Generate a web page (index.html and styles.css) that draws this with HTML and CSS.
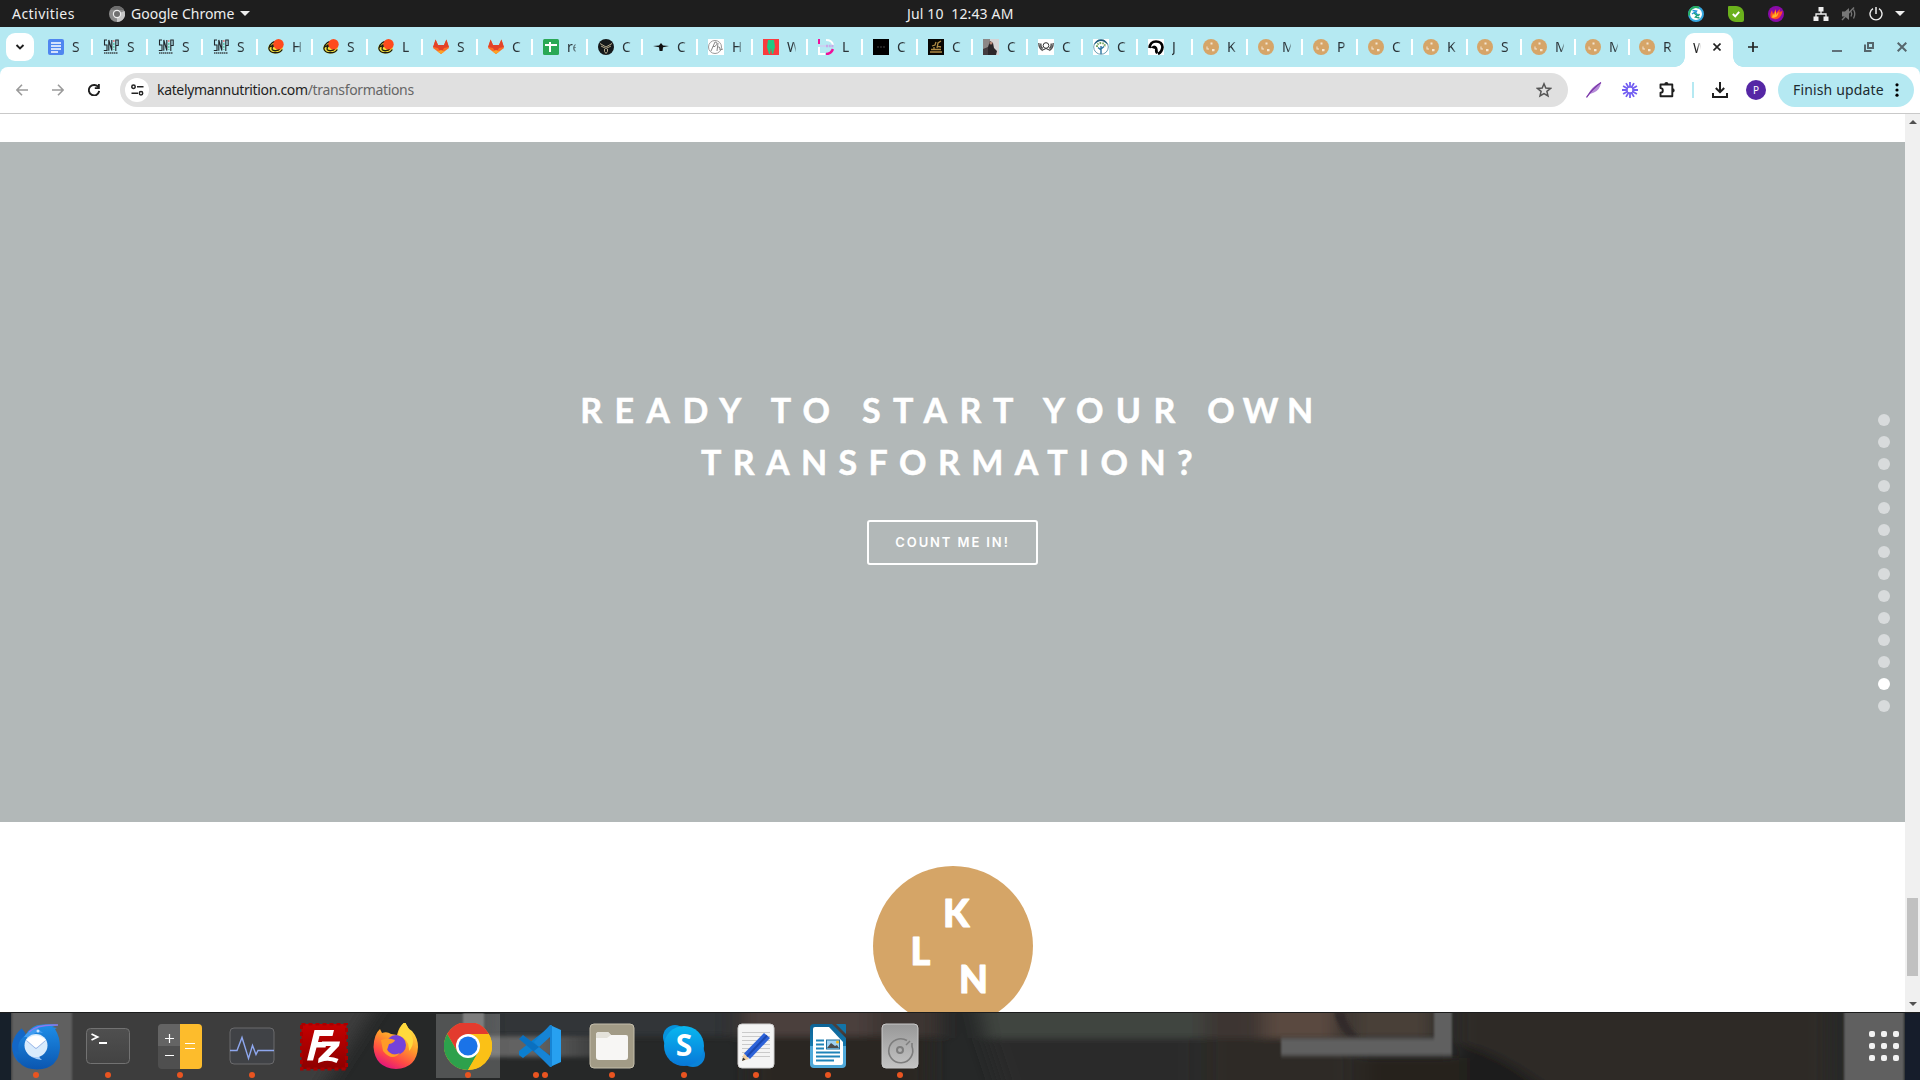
FILE: index.html
```html
<!DOCTYPE html>
<html lang="en">
<head>
<meta charset="utf-8">
<title>Transformations</title>
<link rel="stylesheet" href="styles.css">
</head>
<body>
<svg width="0" height="0" class="defs">
  <defs>
    <linearGradient id="gBlue" x1="0" y1="0" x2="0" y2="1"><stop offset="0" stop-color="#1e8ee8"/><stop offset="1" stop-color="#0b56b0"/></linearGradient>
    <linearGradient id="gGrey" x1="0" y1="0" x2="0" y2="1"><stop offset="0" stop-color="#4f4f4f"/><stop offset="1" stop-color="#434343"/></linearGradient>
    <linearGradient id="gFire" x1="0.8" y1="0" x2="0.3" y2="1"><stop offset="0" stop-color="#fff04a"/><stop offset=".45" stop-color="#ff9a2a"/><stop offset=".75" stop-color="#ff4a45"/><stop offset="1" stop-color="#e1127f"/></linearGradient>
    <linearGradient id="gSkype" x1="0" y1="0" x2="0" y2="1"><stop offset="0" stop-color="#08b7f0"/><stop offset="1" stop-color="#0878d8"/></linearGradient>
    <linearGradient id="gDisk" x1="0" y1="0" x2="0" y2="1"><stop offset="0" stop-color="#989898"/><stop offset="1" stop-color="#c4c4c4"/></linearGradient>
    <linearGradient id="gFz" x1="0" y1="0" x2="0" y2="1"><stop offset="0" stop-color="#c60000"/><stop offset="1" stop-color="#8d0000"/></linearGradient>
    <linearGradient id="gWrite" x1="0" y1="0" x2="0" y2="1"><stop offset="0" stop-color="#0d6396"/><stop offset=".5" stop-color="#1478ad"/><stop offset=".5" stop-color="#4fa9da"/><stop offset="1" stop-color="#4fa9da"/></linearGradient>
    <symbol id="cookie" viewBox="0 0 16 16"><circle cx="8" cy="8" r="8" fill="#d6a568"/><path d="M7.500 3.500h2v2h-2zM3.500 7.500h1v2h1.500v1h-2.500zM9 10h2.500v2.200H9z" fill="#f3e6d2"/></symbol>
    <symbol id="snip" viewBox="0 0 16 16"><path d="M4 1H1.500v5H4v5.500H.8M5.800 11.800V1l3 10.500V1M12.800 12V1h2.400v5.500h-2.400" fill="none" stroke="#20262b" stroke-width="1.100"/><path d="M10.800 1v2" stroke="#e77" stroke-width="1.300"/><path d="M10.800 4v7" stroke="#5cc5a0" stroke-width="1.300" stroke-dasharray="2 1"/><path d="M1 14h14" stroke="#3d484c" stroke-width="1.700" stroke-dasharray="1.500 .5"/></symbol>
    <symbol id="bun" viewBox="0 0 16 16"><ellipse cx="7.500" cy="9" rx="7.300" ry="5.500" fill="#f6e33a"/><path d="M.8 9.500C2 4 6 2 9 3M.8 9.500c1 5.500 11 5.500 13.500 1M4 10.500c2 2 6 1.500 8-1M4 10.500C4 7 6 6.500 8 7M2.500 8q3-3 5-3" fill="none" stroke="#1b1b12" stroke-width="1.300"/><circle cx="10.500" cy="5.200" r="5.200" fill="#ff4a1c"/></symbol>
    <symbol id="fox" viewBox="0 0 16 16"><path d="M8 15L0 9l2.600-8.500L5 6h6l2.400-5.500L16 9z" fill="#fc6d26"/><path d="M2.600.5L5 6h6l2.400-5.500L16 8l-5 1-3 5-3-5-5-1z" fill="#e24329"/><path d="M4.500 12.400L8 15l3.500-2.600L8 11z" fill="#fca326"/></symbol>
  </defs>
</svg>

<header class="topbar">
  <span class="activities">Activities</span>
  <div class="appmenu">
    <svg width="16" height="16" viewBox="0 0 16 16"><circle cx="8" cy="8" r="8" fill="#8a8a8a"/><path d="M8 8l7.500-3A8 8 0 0 1 8 16z" fill="#c6c6c6"/><path d="M8 4h7A8 8 0 0 0 1.500 3.500z" fill="#6d6d6d"/><circle cx="8" cy="8" r="4.200" fill="#eee"/><circle cx="8" cy="8" r="3" fill="#707070"/></svg>
    <span>Google Chrome</span>
    <i class="caret"></i>
  </div>
  <span class="clock">Jul 10&nbsp; 12:43 AM</span>
  <div class="tray">
    <svg width="16" height="16" viewBox="0 0 16 16"><circle cx="8" cy="8" r="7" fill="#fff" stroke="#35a7e0" stroke-width="2"/><path d="M1.200 9.500A7 7 0 0 1 11 1.700" fill="none" stroke="#27ae60" stroke-width="2"/><path d="M4.500 4.500l4 .5-1 1.500 3 3.500M7 6l-3 2" stroke="#2196d8" stroke-width="1.500" fill="none"/><path d="M11.500 12l-4-1 1.500-1.500L6 7M10 10l1.500-2" stroke="#1fa37a" stroke-width="1.500" fill="none"/></svg>
    <svg width="16" height="16" viewBox="0 0 16 16"><path d="M1 0h7c5 0 8 4 8 8v6a2 2 0 0 1-2 2H8c-5 0-8-4-8-8V1q0-1 1-1z" fill="#6bb11c"/><path d="M4.800 8l2.400 2.300 4-4.500" fill="none" stroke="#fff" stroke-width="1.900"/></svg>
    <svg width="16" height="16" viewBox="0 0 16 16"><circle cx="8" cy="8" r="8" fill="#8a0aa8"/><path d="M3 12C1.500 9 3 6 4 4l1 4 3-5v4l4-4-.5 3L14.500 5C13.500 11 10 14 6 13z" fill="#ff4b26"/><path d="M4 11.500l1-4 1 2L8 4v5l2.500-3c0 4-3 6.500-6.500 5.500z" fill="#ffb626"/></svg>
    <svg class="net" width="16" height="14" viewBox="0 0 16 14"><path d="M5.500 0h5v4.500h-5zM.5 9.500h5V14h-5zM10.500 9.500h5V14h-5z" fill="#eee"/><path d="M8 4v3M3 10V7h10v3" fill="none" stroke="#eee" stroke-width="1.300"/></svg>
    <svg class="vol" width="16" height="14" viewBox="0 0 16 14"><path d="M1 4.500h3L8 1v12L4 9.500H1z" fill="#777"/><path d="M10 4.500q1.500 2.500 0 5M12.500 2.500q2.500 4.500 0 9" stroke="#777" stroke-width="1.300" fill="none"/><path d="M1 13L13 .5" stroke="#777" stroke-width="1.400"/></svg>
    <svg class="pow" width="14" height="14" viewBox="0 0 14 14"><path d="M4 1.700a6 6 0 1 0 6 0" fill="none" stroke="#eee" stroke-width="1.400"/><path d="M7 0v7" stroke="#eee" stroke-width="1.500"/></svg>
    <i class="caret"></i>
  </div>
</header>

<section class="tabstrip">
  <button class="tabsearch"><svg width="10" height="8" viewBox="0 0 10 8"><path d="M1.500 2l3.500 3.500L8.500 2" fill="none" stroke="#1f1f1f" stroke-width="1.900"/></svg></button>
  <div class="tabs">
    <div class="tab"><svg viewBox="0 0 16 16"><rect width="16" height="16" rx="2" fill="#4f86f0"/><path d="M3 4h10M3 7h10M3 10h10M3 13h7" stroke="#fff" stroke-width="1.600"/></svg><span>S</span></div>
    <div class="tab"><svg><use href="#snip"/></svg><span>S</span></div>
    <div class="tab"><svg><use href="#snip"/></svg><span>S</span></div>
    <div class="tab"><svg><use href="#snip"/></svg><span>S</span></div>
    <div class="tab"><svg><use href="#bun"/></svg><span>H</span></div>
    <div class="tab"><svg><use href="#bun"/></svg><span>S</span></div>
    <div class="tab"><svg><use href="#bun"/></svg><span>L</span></div>
    <div class="tab"><svg><use href="#fox"/></svg><span>S</span></div>
    <div class="tab"><svg><use href="#fox"/></svg><span>C</span></div>
    <div class="tab"><svg viewBox="0 0 16 16"><rect width="16" height="16" rx="1.500" fill="#2aa855"/><path d="M2 6h12M7 3v10" stroke="#fff" stroke-width="2"/></svg><span>re</span></div>
    <div class="tab"><svg viewBox="0 0 16 16"><circle cx="8" cy="8" r="8" fill="#15191b"/><path d="M2 4.500L8 8l6-3.500M3 7l5 2.500L13 7M6.500 10v2.500L8 14.500l1.500-2V10" fill="none" stroke="#b5a98c" stroke-width="1"/></svg><span>C</span></div>
    <div class="tab"><svg viewBox="0 0 16 16"><path d="M0 7l6-.5L8 4l2 2.500 6 .5-6 1.200L9.500 12h-3L6 8.200z" fill="#111"/></svg><span>C</span></div>
    <div class="tab"><svg viewBox="0 0 16 16"><rect width="16" height="16" fill="#fff"/><circle cx="7" cy="8" r="6.500" fill="none" stroke="#999"/><path d="M3 12L7 3q4 0 0 4.500H5M9 12l1-8M9 9q3-3 3 2l3-1" fill="none" stroke="#888"/></svg><span>H</span></div>
    <div class="tab"><svg viewBox="0 0 16 16"><rect width="16" height="16" fill="#fb3b3e"/><path d="M5 1h6l1 7-2 7H9L8 9l-1 6H6L4 8z" fill="#1fca84"/></svg><span>W</span></div>
    <div class="tab"><svg viewBox="0 0 16 16"><path d="M1 0v5" stroke="#f0109a" stroke-width="2"/><path d="M1 8v7h6M8 1q6 0 7 5" stroke="#fff" stroke-width="2" fill="none"/><path d="M15 10q-2 5-7 5" stroke="#f0109a" stroke-width="2.500" fill="none"/><path d="M2 7h6" stroke="#c9d4f2" stroke-width="2"/><path d="M8 7h8" stroke="#c9a8e8" stroke-width="2.500" stroke-dasharray="2 .7"/></svg><span>L</span></div>
    <div class="tab"><svg viewBox="0 0 16 16"><rect width="16" height="16"/><path d="M4 8h8" stroke="#444" stroke-dasharray="2 1"/></svg><span>C</span></div>
    <div class="tab"><svg viewBox="0 0 16 16"><rect width="16" height="16" fill="#080603"/><path d="M2 13h12M3 10.500h10M4 7l3-1 1-3M9 9l1-5 3-2M6 11V8M9 7l4 1" stroke="#b08b45" stroke-width="1.300" fill="none"/></svg><span>C</span></div>
    <div class="tab"><svg viewBox="0 0 16 16"><rect width="16" height="16" fill="#d5d3d4"/><path d="M0 0h7v16H0z" fill="#8c8786"/><path d="M7 2l3 2 1 5 3 3-1 4H3l2-8z" fill="#2b2629"/><path d="M0 10l5-2v8H0z" fill="#443d40"/><circle cx="8" cy="4" r="1.500" fill="#b58777"/></svg><span>C</span></div>
    <div class="tab"><svg viewBox="0 0 16 16"><rect width="16" height="16" fill="#fff"/><circle cx="8" cy="6.500" r="2.800" fill="none" stroke="#333"/><path d="M4.800 11q3.200-3 6.400 0" fill="none" stroke="#333"/><path d="M.8 4q0 5.500 4 7.500M15.200 4q0 5.500-4 7.500M2.800 4.500q-.5 3.500 2 5M13.200 4.500q.5 3.500-2 5" fill="none" stroke="#555" stroke-width="1.400"/></svg><span>C</span></div>
    <div class="tab"><svg viewBox="0 0 16 16"><rect width="16" height="16" fill="#fff"/><circle cx="8" cy="8" r="7.300" fill="#fff" stroke="#6ba0b4"/><path d="M1 6Q3 0 8 .5 13 0 15 6 11 2 8 2 5 2 1 6z" fill="#205b7c"/><path d="M8 15V7M8 11L5 8.500M8 10l3-2.500" stroke="#2a74a0" stroke-width="1.400"/><path d="M4 8q0-4 4-4t4 4" fill="none" stroke="#72a55c" stroke-width="2" stroke-dasharray="1.500 1"/></svg><span>C</span></div>
    <div class="tab"><svg viewBox="0 0 16 16"><rect width="16" height="16" fill="#fff"/><path d="M1.500 9C2 4 4.500 2.500 8 2.500q6 0 6.500 5.500-.5 5-4.500 7" fill="none" stroke="#000" stroke-width="2.600"/><path d="M2 8.500L6 6.500q4 0 4 7l-1.500 1.500q-2-1-1.500-5L4 9z" fill="#000"/></svg><span>J</span></div>
    <div class="tab"><svg><use href="#cookie"/></svg><span>K</span></div>
    <div class="tab"><svg><use href="#cookie"/></svg><span>M</span></div>
    <div class="tab"><svg><use href="#cookie"/></svg><span>P</span></div>
    <div class="tab"><svg><use href="#cookie"/></svg><span>C</span></div>
    <div class="tab t54"><svg><use href="#cookie"/></svg><span>K</span></div>
    <div class="tab t54"><svg><use href="#cookie"/></svg><span>S</span></div>
    <div class="tab t54"><svg><use href="#cookie"/></svg><span>M</span></div>
    <div class="tab t54"><svg><use href="#cookie"/></svg><span>M</span></div>
    <div class="tab last"><svg><use href="#cookie"/></svg><span>R</span></div>
  </div>
  <div class="tab-active"><span>W</span><svg width="8" height="8" viewBox="0 0 8 8"><path d="M.5.500l7 7M7.500.500l-7 7" stroke="#222" stroke-width="1.600"/></svg></div>
  <svg class="newtab" width="10" height="10" viewBox="0 0 10 10"><path d="M5 0v10M0 5h10" stroke="#222" stroke-width="1.700"/></svg>
  <div class="winctl">
    <svg width="10" height="10" viewBox="0 0 10 10"><path d="M0 9h10" stroke="#60717a" stroke-width="2"/></svg>
    <svg width="10" height="10" viewBox="0 0 10 10"><path d="M4 1h5v5H4z" fill="none" stroke="#56666c" stroke-width="2"/><path d="M1 2.500V9h6.500" fill="none" stroke="#56666c" stroke-width="2"/></svg>
    <svg width="10" height="10" viewBox="0 0 10 10"><path d="M.7.700l8.600 8.600M9.300.700L.7 9.300" stroke="#56666c" stroke-width="2"/></svg>
  </div>
</section>

<nav class="toolbar">
  <div class="navbtns">
    <svg width="12" height="12" viewBox="0 0 12 12"><path d="M12 6H1M6 .8L.9 6 6 11.200" fill="none" stroke="#9b9b9b" stroke-width="1.600"/></svg>
    <svg width="12" height="12" viewBox="0 0 12 12"><path d="M0 6h11M6 .8L11.100 6 6 11.200" fill="none" stroke="#9b9b9b" stroke-width="1.600"/></svg>
    <svg width="12" height="12" viewBox="0 0 12 12"><path d="M10.500 3.500A5.200 5.200 0 1 0 11.200 7" fill="none" stroke="#1f1f1f" stroke-width="1.900"/><path d="M11.800 0v5H6.800V3.300h3.200V0z" fill="#1f1f1f"/></svg>
  </div>
  <div class="omnibox">
    <span class="site"><svg width="13" height="12" viewBox="0 0 13 12"><circle cx="2.500" cy="2.700" r="1.700" fill="none" stroke="#222" stroke-width="1.500"/><circle cx="10" cy="9.200" r="1.700" fill="none" stroke="#222" stroke-width="1.500"/><path d="M6 2.700h6.500M.5 9.200H7" stroke="#222" stroke-width="1.600"/></svg></span>
    <span class="url">katelymannutrition.com<em>/transformations</em></span>
    <svg class="star" width="16" height="16" viewBox="0 0 16 16"><path d="M8 1.800l1.800 4.200 4.700.4-3.600 3 1.100 4.600L8 11.600 4 14l1.100-4.600-3.600-3L6.200 6z" fill="none" stroke="#555" stroke-width="1.500"/></svg>
  </div>
  <div class="actions">
    <svg class="a1" width="16" height="16" viewBox="0 0 16 16"><path d="M1 15L4 9Q8 3 15 .5 14 8 8 10.500L4 12z" fill="#b58bd8"/><path d="M.5 15.500Q6 7 15 .5" stroke="#7a36a8" stroke-width="1.300" fill="none"/></svg>
    <svg class="a2" width="16" height="16" viewBox="0 0 16 16"><path d="M10.500 8H16M10.200 9.200l4.700 2.800M9.200 10.200l2.800 4.700M8 10.500V16M6.800 10.200L4 14.900M5.800 9.200L1.100 12M5.500 8H0M5.800 6.800L1.100 4M6.800 5.800L4 1.100M8 5.500V0M9.200 5.800L12 1.100M10.200 6.800L14.900 4" stroke="#735ff2" stroke-width="1.800"/><circle cx="8" cy="8" r="3" fill="none" stroke="#735ff2"/></svg>
    <svg class="a3" width="18" height="18" viewBox="0 0 18 18"><path d="M2.500 3.500h11.800v11.800H2.500v-3.600a2.300 2.300 0 0 0 0-4.600z" fill="none" stroke="#1f1f1f" stroke-width="1.900" stroke-linejoin="round"/><path d="M6.300 3.500a2 2.300 0 0 1 4.200 0zM14.300 7.300a2.300 2 0 0 1 0 4.200z" fill="#1f1f1f"/></svg>
    <i class="divider"></i>
    <svg class="a4" width="16" height="16" viewBox="0 0 16 16"><path d="M8 0v10M3.800 6L8 10.200 12.200 6M1 11v4h14v-4" fill="none" stroke="#1f1f1f" stroke-width="2"/></svg>
    <span class="avatar">P</span>
    <span class="update"><span>Finish update</span><svg width="4" height="14" viewBox="0 0 4 14"><circle cx="2" cy="1.800" r="1.600"/><circle cx="2" cy="7" r="1.600"/><circle cx="2" cy="12.200" r="1.600"/></svg></span>
  </div>
</nav>

<main class="viewport">
  <div class="page">
    <section class="cta">
      <h1>READY TO START YOUR <span class="own">OWN</span><br><span class="second">TRANSFORMATION?</span></h1>
      <a class="cta-button">COUNT ME IN!</a>
      <div class="pager"><i></i><i></i><i></i><i></i><i></i><i></i><i></i><i></i><i></i><i></i><i></i><i></i><i class="on"></i><i></i></div>
    </section>
    <footer class="brand">
      <svg class="logo" width="160" height="160" viewBox="0 0 160 160"><circle cx="80" cy="80" r="80" fill="#d5a567"/><g class="logo-text"><text x="70" y="61">K</text><text x="37.500" y="99">L</text><text x="86" y="127" textLength="29" lengthAdjust="spacingAndGlyphs">N</text></g></svg>
    </footer>
  </div>
  <div class="scrollbar"><i class="up"></i><i class="thumb"></i><i class="down"></i></div>
</main>

<footer class="dock">
  <svg class="wallpaper" width="1920" height="68" viewBox="0 0 1920 68">
    <defs><filter id="soft" x="-10%" y="-50%" width="120%" height="200%"><feGaussianBlur stdDeviation="10 3"/></filter><filter id="edge"><feGaussianBlur stdDeviation="1 2"/></filter>
    <linearGradient id="fade"><stop offset="0" stop-color="#5e5e5e"/><stop offset=".4" stop-color="#646464"/><stop offset="1" stop-color="#646464" stop-opacity="0"/></linearGradient></defs>
    <rect width="1920" height="68" fill="#262828"/>
    <g filter="url(#soft)">
      <path d="M-40-20h425l-70 108H-40z" fill="#3c3c3c"/>
      <rect x="490" y="-20" width="240" height="44" fill="#323537"/>
      <rect x="740" y="-20" width="130" height="46" fill="#4b3f3c"/>
      <rect x="870" y="-20" width="70" height="46" fill="#3c3531"/>
      <rect x="750" y="24" width="180" height="60" fill="#2c2522"/>
      <path d="M975-20h240l-10 46H985z" fill="#414440"/>
      <path d="M985 26h215v60H1005z" fill="#2c2c2b"/>
      <rect x="1205" y="-20" width="50" height="46" fill="#3c3430"/>
      <rect x="1205" y="26" width="150" height="60" fill="#2f2926"/>
      <rect x="1260" y="-20" width="80" height="46" fill="#5a4a40"/>
      <rect x="1350" y="-20" width="85" height="46" fill="#4a4039"/>
      <rect x="1360" y="46" width="95" height="40" fill="#25211e"/>
      <rect x="1455" y="-20" width="375" height="110" fill="#2e2a25"/>
      <path d="M1460 30q60 20 100 60h-100z" fill="#1f1d1b"/>
    </g>
    <path d="M1334 0q4 18 16 26h10q-12-10-16-26z" fill="#302c2a" filter="url(#edge)"/>
    <g filter="url(#edge)">
      <path d="M1434-9h18v53h-171V26h153z" fill="#616161"/>
      <path d="M463-9h21v53h-21z" fill="#5d5d5d"/>
      <path d="M470 24h160v21H470z" fill="url(#fade)"/>
      <path d="M12-9h60v86H12zM1844-9h60v86h-60z" fill="#606060"/>
    </g>
    <path d="M0 0h11v68H0z" fill="#17202a"/><path d="M1905 0h15v68h-15z" fill="#161d2b"/>
    <path d="M0 .5h1920" stroke="#1c1d1d"/>
  </svg>
  <div class="apps">
    <div class="app"><svg viewBox="0 0 48 48"><path d="M9.500 5.500Q2 12 .2 21q-1 12 7 19l8-24q-1-6-5.500-10.500z" fill="#1367c6"/><path d="M7 30Q4 18 14 12 18 2 31 1.500q9-.5 15 .5l-6 2 5 1-2 1q5 8 5 18-1 22-23 22.500Q5 46 3 28z" fill="url(#gBlue)"/><path d="M12 14q4-7 13-9l6 5q-9-2-12 4z" fill="#3f9cf0"/><path d="M17 9q8-8 29-7" stroke="#8a7bf0" stroke-width="1.500" fill="none"/><circle cx="26" cy="8" r="1.500" fill="#cfe3fb"/><path d="M14 28q4 8 16 9-3-2-3-5z" fill="#a9d0fb"/><circle cx="24" cy="22.500" r="11.500" fill="#d8ebfc"/><path d="M14 17q10-9 20 0l-9 7q-1 1-2 0z" fill="#fff"/><path d="M14.500 17.500L23 25q1 1 2 0l8.500-7.500" fill="none" stroke="#9db8e8" stroke-width="1"/></svg><b></b></div>
    <div class="app"><svg viewBox="0 0 48 48"><rect x="2.500" y="5.500" width="43" height="35" rx="4" fill="url(#gGrey)" stroke="#727272"/><path d="M7.500 11l6 3-6 3M15 20h8" fill="none" stroke="#fff" stroke-width="1.900"/></svg><b></b></div>
    <div class="app"><svg viewBox="0 0 48 48"><rect x="2" y="1" width="44" height="45" rx="4" fill="#4f4f4f"/><path d="M6 1h18v22H2V5q0-4 4-4z" fill="#646464"/><path d="M24 1h18q4 0 4 4v37q0 4-4 4H24z" fill="#fdbc2c"/><path d="M13.500 11v9M9 15.500h9M9 32.500h9M29 20.500h10M29 25.500h10" stroke="#fff" stroke-width="1.200"/></svg><b></b></div>
    <div class="app"><svg viewBox="0 0 48 48"><rect x="2" y="5" width="44" height="36" rx="4" fill="#404246" stroke="#6a6a6c"/><path d="M2 27.500h7l5-13 6.500 21 4-13 3.500 9 2-4h16" fill="none" stroke="#8ea7ee" stroke-width="1.400"/></svg><b></b></div>
    <div class="app"><svg viewBox="0 0 48 48"><rect x="1.500" y="1" width="45" height="45" fill="url(#gFz)" stroke="#a80000" stroke-width="3" stroke-dasharray="4 3"/><path d="M14.500 7H34l-1.500 6H19.500l-1.500 6h9l-1.500 5.500h-9L13 37.500H7z" fill="#fff"/><path d="M22 18.500h18l-1 4.500-10.500 11q4-.5 10 2l-2 4q-8-4-15.500-1l-3 1 .5-4.500L31 23H21z" fill="#fff"/></svg></div>
    <div class="app"><svg viewBox="0 0 48 48"><path d="M1.500 24Q2 11 8 6l2 4q5-2 9 1l6 1q2-9 8-13 2 6 7 9 6 7 6 16-1 21-22 22Q3 45 1.500 24z" fill="url(#gFire)"/><circle cx="24" cy="22" r="10" fill="#7542d9"/><path d="M9 17q7-3 14 0-1 3-6 4l-2 6q5 7 13 3-8 9-17-2z" fill="#ff9b28"/><path d="M26 12q2-9 7-13 5 9 7 14 3 8-3 15 1-12-11-16z" fill="#ffd93c"/></svg></div>
    <div class="app current"><svg viewBox="0 0 48 48"><circle cx="24" cy="23" r="24" fill="#fbc116"/><path d="M3.200 11A24 24 0 0 1 44.800 11H24L13.600 29z" fill="#e33b2e"/><path d="M3.200 11A24 24 0 0 0 24 47l10.400-18-10.400 6-10.400-6z" fill="#2da14c"/><path d="M24 11h20.800A24 24 0 0 1 24 47l10.400-18z" fill="#fbc116"/><circle cx="24" cy="23" r="12" fill="#fff"/><circle cx="24" cy="23" r="9.600" fill="#1a73e8"/></svg><b></b></div>
    <div class="app"><svg viewBox="0 0 48 48"><path d="M3 32l4 3L36 12V2L3 28z" fill="#0b7fd0"/><path d="M3 16l4-4 29 22v10z" fill="#0a70c0"/><path d="M34 2l11 5v32l-11 5z" fill="#27a0f0"/><path d="M34 2l2 1v40l-2 1L18 28l5-4 11 9V14L23 24l-5-5z" fill="#1684d5"/></svg><b></b><b></b></div>
    <div class="app"><svg viewBox="0 0 48 48"><rect x="2" y="1" width="44" height="44" rx="4" fill="#a29b86" stroke="#c4beab"/><path d="M8 17v-5q0-3 3-3h9l3 3h15q2 0 2 2v20q0 3-3 3H11q-3 0-3-3z" fill="#f7f6f4"/><path d="M8 15v-3q0-3 3-3h9l3 3-4 3z" fill="#e4e2da"/></svg><b></b></div>
    <div class="app"><svg viewBox="0 0 48 48"><circle cx="15" cy="14" r="12" fill="#0792dc"/><circle cx="33" cy="32" r="12" fill="#0a83d8"/><circle cx="24" cy="23" r="20" fill="url(#gSkype)"/><text class="skype-s" x="24" y="33" text-anchor="middle">S</text></svg><b></b></div>
    <div class="app"><svg viewBox="0 0 48 48"><rect x="6" y="1" width="36" height="44" rx="4" fill="#f4f4f4" stroke="#d0d0d0"/><path d="M10 9.500h28M10 13.500h28M10 17.500h28M10 21.500h28M10 25.500h28M10 29.500h28M10 33.500h28" stroke="#cacaca"/><path d="M10 38l2-8 5 6z" fill="#f1cfa0"/><path d="M10 38l1-3.500 2.500 2z" fill="#333"/><path d="M12 30.500L32 10l6 5-20 21z" fill="#2d62d8"/><path d="M15 33.500L35 12.500" stroke="#1c48b0" stroke-width="2"/></svg><b></b></div>
    <div class="app"><svg viewBox="0 0 48 48"><path d="M10 1h18l14 14v26q0 4-4 4H10q-4 0-4-4V5q0-4 4-4z" fill="url(#gWrite)"/><path d="M11 4h14l14 15v21q0 2-2 2H11q-2 0-2-2V6q0-2 2-2z" fill="#fff"/><path d="M32 1h9q1 0 1 1v9z" fill="#1274a8"/><path d="M12 17.500h8M12 21.500h8M12 25.500h8M12 29.500h24M12 33.500h24M12 37.500h18" stroke="#1f83b8" stroke-width="1.800"/><rect x="22.500" y="17" width="13" height="9" fill="#9fd1f2" stroke="#1f6e9c"/><path d="M23 25l4-5 4 3 2-1 2 3z" fill="#4b4b4b"/><circle cx="33.500" cy="19" r="1.500" fill="#f6b818"/></svg><b></b></div>
    <div class="app"><svg viewBox="0 0 48 48"><rect x="6" y="1" width="36" height="44" rx="4" fill="url(#gDisk)" stroke="#c9c9c9"/><path d="M31 17.500a12 12 0 1 0 5 6V20" fill="none" stroke="#7d7d7d" stroke-width="1.600"/><path d="M30 22l4-4" stroke="#7d7d7d" stroke-width="1.500"/><circle cx="24" cy="27" r="3" fill="none" stroke="#7d7d7d" stroke-width="2"/></svg><b></b></div>
  </div>
  <div class="grid"><i></i><i></i><i></i><i></i><i></i><i></i><i></i><i></i><i></i></div>
</footer>
</body>
</html>
```
FILE: styles.css
```css
* { box-sizing: border-box; }
body {
  margin: 0;
  width: 1920px;
  height: 1080px;
  overflow: hidden;
  display: flex;
  flex-direction: column;
  font-family: "Noto Sans", sans-serif;
  font-size: 14px;
  background: #fff;
}
svg { display: block; flex: none; }
i { display: block; }
.defs { position: absolute; }

/* desktop top bar */
.topbar {
  height: 27px;
  flex: none;
  background: #1e1e1e;
  color: #eee;
  display: grid;
  grid-template-columns: 109px 798px 1fr auto;
  align-items: center;
  white-space: nowrap;
}
.activities { padding-left: 12px; letter-spacing: 0.45px; }
.appmenu { display: flex; align-items: center; }
.appmenu span { margin: 0 6px; }
.clock { letter-spacing: 0.15px; padding-bottom: 1px; }
.caret {
  border: 5px solid transparent;
  border-top-color: #eee;
  border-bottom: 0;
}
.tray { display: flex; align-items: center; padding-right: 15px; }
.tray svg { margin-right: 24px; }
.tray .net { margin: 0 12px 0 5px; }
.tray .vol { margin-right: 12px; }
.tray .pow { margin-right: 12px; }

/* tab strip */
.tabstrip {
  height: 40px;
  flex: none;
  background: #b5e9f2;
  display: flex;
  align-items: center;
  padding-left: 6px;
}
.tabsearch {
  width: 28px;
  height: 28px;
  border: 0;
  border-radius: 9px;
  background: #fff;
  display: grid;
  place-items: center;
  padding: 0;
}
.tabs { display: flex; margin-left: 14px; }
.tab {
  width: 55px;
  display: flex;
  align-items: center;
  color: #2a3236;
}
.tab svg { width: 16px; height: 16px; }
.tab span {
  margin-left: 8px;
  width: 9px;
  height: 20px;
  line-height: 20px;
  overflow: hidden;
  white-space: nowrap;
  -webkit-mask-image: linear-gradient(90deg, #000 60%, rgba(0, 0, 0, 0.35));
  mask-image: linear-gradient(90deg, #000 60%, rgba(0, 0, 0, 0.35));
}
.tab::after {
  content: "";
  width: 2px;
  height: 16px;
  margin-left: 10px;
  background: #fff;
}
.t54 { width: 54px; }
.last { width: 46px; }
.last::after { display: none; }
.tab-active {
  width: 48px;
  height: 34px;
  align-self: flex-end;
  background: #fff;
  border-radius: 9px 9px 0 0;
  position: relative;
  display: flex;
  align-items: center;
  padding: 0 0 6px 8px;
  color: #222;
}
.tab-active::before,
.tab-active::after {
  content: "";
  position: absolute;
  bottom: 0;
  width: 10px;
  height: 10px;
}
.tab-active::before { left: -10px; background: radial-gradient(circle at 0 0, transparent 9.5px, #fff 10px); }
.tab-active::after { right: -10px; background: radial-gradient(circle at 100% 0, transparent 9.5px, #fff 10px); }
.tab-active span {
  width: 8px;
  overflow: hidden;
  margin-right: 12px;
  -webkit-mask-image: linear-gradient(90deg, #000 50%, transparent);
  mask-image: linear-gradient(90deg, #000 50%, transparent);
}
.newtab { margin-left: 15px; }
.winctl { display: flex; margin-left: 74px; gap: 22px; }
.winctl svg:last-child { margin-left: 1px; }

/* toolbar */
.toolbar {
  height: 47px;
  flex: none;
  background: #b5e9f2;
  border-bottom: 1px solid #c9c9c9;
  display: flex;
  align-items: center;
  position: relative;
  z-index: 0;
}
.toolbar::before {
  content: "";
  position: absolute;
  inset: 0;
  z-index: -1;
  background: #fff;
  border-radius: 8px 8px 0 0;
}
.navbtns { width: 120px; display: flex; gap: 24px; padding-left: 16px; }
.omnibox {
  width: 1448px;
  height: 34px;
  border-radius: 17px;
  background: #e0e0e0;
  display: flex;
  align-items: center;
  padding: 0 16px 0 5px;
}
.site {
  width: 24px;
  height: 24px;
  border-radius: 50%;
  background: #fff;
  display: grid;
  place-items: center;
}
.url { margin-left: 8px; padding-bottom: 2px; letter-spacing: -0.34px; color: #1f1f1f; flex: 1; }
.url em { font-style: normal; color: #666; }
.actions { display: flex; align-items: center; }
.a1 { margin-left: 18px; }
.a2 { margin-left: 20px; }
.a3 { margin-left: 20px; }
.divider { width: 2px; height: 16px; background: #b5e9f2; margin-left: 16px; }
.a4 { margin-left: 18px; }
.avatar {
  width: 20px;
  height: 20px;
  border-radius: 50%;
  background: #5527a5;
  color: #fff;
  font-size: 10px;
  display: grid;
  place-items: center;
  margin-left: 18px;
}
.update {
  width: 136px;
  height: 34px;
  border-radius: 17px;
  background: #b5e9f2;
  margin-left: 12px;
  padding: 0 15px;
  display: flex;
  align-items: center;
  justify-content: space-between;
  letter-spacing: 0.15px;
  white-space: nowrap;
  color: #1c2b30;
}
.update span { padding-bottom: 2px; }

/* web page */
.viewport { height: 898px; flex: none; display: flex; overflow: hidden; }
.page { flex: 1; padding-top: 28px; }
.cta {
  height: 680px;
  background: #b2b8b8;
  position: relative;
  display: flex;
  flex-direction: column;
  align-items: center;
  padding-top: 242px;
}
.cta h1 {
  margin: 0;
  font: bold 34px/52px Lato, sans-serif;
  color: #fff;
  text-align: center;
  letter-spacing: 12.4px;
  word-spacing: -1.2px;
  white-space: nowrap;
  -webkit-text-stroke: 0.5px #fff;
}
.own { letter-spacing: 8.6px; margin-right: 3px; }
.second { letter-spacing: 11.4px; }
.cta-button {
  width: 171px;
  height: 45px;
  margin-top: 32px;
  border: 2px solid #fff;
  border-radius: 3px;
  color: #fff;
  font: 600 13px/41px Inter, sans-serif;
  letter-spacing: 1.9px;
  text-align: center;
}
.pager {
  position: absolute;
  right: 15px;
  top: 272px;
  display: grid;
  gap: 10px;
}
.pager i { width: 12px; height: 12px; border-radius: 50%; background: #d8dbdc; }
.pager .on { background: #fff; }
.brand { display: flex; justify-content: center; padding-top: 44px; }
.logo-text {
  font: 900 38px Lato, sans-serif;
  fill: #fff;
  stroke: #fff;
  stroke-width: 1px;
  stroke-linejoin: round;
}
.scrollbar {
  width: 15px;
  background: #f0f0f0;
  display: flex;
  flex-direction: column;
  align-items: center;
}
.up { border: 4px solid transparent; border-bottom-color: #505050; border-top: 0; margin-top: 6px; }
.thumb { width: 11px; height: 78px; background: #c1c1c1; margin-top: 774px; }
.down { border: 4px solid transparent; border-top-color: #505050; border-bottom: 0; margin-top: 26px; }

/* dock */
.dock { height: 68px; flex: none; position: relative; display: flex; justify-content: space-between; overflow: hidden; }
.wallpaper { position: absolute; inset: 0; }
.apps { display: flex; position: relative; }
.app {
  width: 72px;
  height: 68px;
  display: flex;
  flex-wrap: wrap;
  justify-content: center;
  align-content: flex-start;
  gap: 0 3px;
  padding: 11px 4px 0;
}
.app svg { width: 48px; height: 48px; margin: 0 8px; }
.app b { width: 6px; height: 6px; border-radius: 50%; background: #e95420; margin-top: 1px; }
.current { background: linear-gradient(rgba(255, 255, 255, 0.2), rgba(255, 255, 255, 0.2)) no-repeat 4px 2px / 64px 64px; }
.grid {
  position: relative;
  display: grid;
  grid-template-columns: repeat(3, 6px);
  gap: 6px;
  padding: 19px 21px 0 0;
  align-content: start;
}
.grid i { width: 6px; height: 6px; border-radius: 2px; background: #f2f2f2; }
.skype-s { font: bold 30px "Open Sans", sans-serif; fill: #fff; }
```
